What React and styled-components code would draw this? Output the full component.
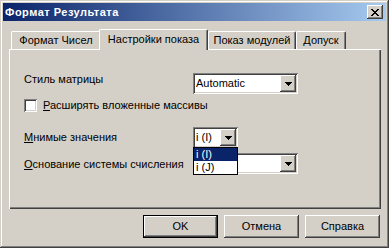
import React from 'react';
import styled, { createGlobalStyle, css } from 'styled-components';

const Global = createGlobalStyle`
  html, body { margin: 0; padding: 0; background: #d4d0c8; overflow: hidden; }
  body { font-family: "Liberation Sans", Arial, sans-serif; font-size: 11px; }
`;

const raised = css`
  box-shadow: inset -1px -1px #404040, inset 1px 1px #ffffff, inset -2px -2px #808080, inset 2px 2px #d4d0c8;
`;
const sunken = css`
  box-shadow: inset 1px 1px #808080, inset -1px -1px #ffffff, inset 2px 2px #404040, inset -2px -2px #d4d0c8;
`;

const Window = styled.div`
  width: 389px;
  height: 248px;
  box-sizing: border-box;
  padding: 3px;
  background: #d4d0c8;
  box-shadow: inset -1px -1px #404040, inset 1px 1px #d4d0c8, inset -2px -2px #808080, inset 2px 2px #ffffff;
  display: flex;
  flex-direction: column;
  font-family: "Liberation Sans", Arial, sans-serif;
  font-size: 11px;
  color: #000;
`;

const TitleBar = styled.div`
  height: 18px;
  flex: none;
  display: flex;
  align-items: center;
  justify-content: space-between;
  padding: 0 3px 0 2px;
  background: linear-gradient(to right, #0a246a, #a6caf0);
`;

const Title = styled.span`
  color: #fff;
  font-weight: bold;
  font-size: 11px;
  letter-spacing: 0.5px;
  line-height: 13px;
  white-space: nowrap;
`;

const CloseButton = styled.div`
  width: 16px;
  height: 14px;
  background: #d4d0c8;
  ${raised};
  display: flex;
  align-items: center;
  justify-content: center;
`;

const Body = styled.div`
  flex: 1;
  display: flex;
  flex-direction: column;
  padding: 8px 5px 0 6px;
`;

const TabRow = styled.div`
  display: flex;
  height: 21px;
  padding-left: 2px;
  position: relative;
  z-index: 1;
  margin-bottom: -1px;
`;

const Tab = styled.div`
  box-sizing: border-box;
  position: relative;
  z-index: ${p => (p.$active ? 2 : 1)};
  width: ${p => p.$w}px;
  height: ${p => (p.$active ? 21 : 18)}px;
  margin-top: ${p => (p.$active ? 0 : 2)}px;
  margin-left: ${p => p.$ml || 0}px;
  background: #d4d0c8;
  border-top: 1px solid #fff;
  border-left: 1px solid #fff;
  border-right: 1px solid #404040;
  border-radius: 2px 2px 0 0;
  box-shadow: inset -1px 0 #808080;
  display: flex;
  align-items: ${p => (p.$active ? 'flex-start' : 'center')};
  padding-top: ${p => (p.$active ? 3 : 0)}px;
  justify-content: center;
  white-space: nowrap;
  line-height: 13px;
`;

const Panel = styled.div`
  height: 160px;
  box-sizing: border-box;
  background: #d4d0c8;
  box-shadow: inset 1px 1px #ffffff, inset -1px -1px #404040, inset -2px -2px #808080;
  display: flex;
  flex-direction: column;
  padding-left: 15px;
`;

const Row = styled.div`
  display: flex;
  align-items: flex-start;
  margin-top: ${p => p.$top}px;
`;

const Label = styled.div`
  width: 169px;
  padding-top: ${p => p.$dy || 0}px;
  line-height: 13px;
  white-space: nowrap;
`;

const CheckLabel = styled.div`
  margin-left: 6px;
  line-height: 13px;
  white-space: nowrap;
`;

const Checkbox = styled.div`
  width: 13px;
  height: 13px;
  box-sizing: border-box;
  background: #fff;
  ${sunken};
`;

const Combo = styled.div`
  position: relative;
  width: ${p => p.$w}px;
  height: 21px;
  box-sizing: border-box;
  padding: 2px 2px 2px 3px;
  background: #fff;
  ${sunken};
  display: flex;
  align-items: center;
`;

const ComboText = styled.div`
  flex: 1;
  line-height: 13px;
  white-space: nowrap;
  overflow: hidden;
`;

const DropButton = styled.div`
  width: 16px;
  height: 17px;
  background: #d4d0c8;
  ${raised};
  display: flex;
  align-items: center;
  justify-content: center;
`;

const DropList = styled.div`
  position: absolute;
  top: 20px;
  left: 0;
  width: 45px;
  box-sizing: border-box;
  border: 1px solid #000;
  background: #fff;
  z-index: 5;
`;

const DropItem = styled.div`
  height: 13px;
  line-height: 13px;
  padding-left: 2px;
  background: ${p => (p.$sel ? '#0a246a' : '#fff')};
  color: ${p => (p.$sel ? '#fff' : '#000')};
  white-space: nowrap;
`;

const ButtonRow = styled.div`
  display: flex;
  justify-content: flex-end;
  gap: 6px;
  margin-top: 6px;
  padding-right: 1px;
`;

const Button = styled.div`
  width: 75px;
  height: 23px;
  box-sizing: border-box;
  background: #d4d0c8;
  ${p =>
    p.$default
      ? css`box-shadow: inset 0 0 0 1px #000, inset -2px -2px #404040, inset 2px 2px #fff, inset -3px -3px #808080;`
      : raised};
  display: flex;
  align-items: center;
  justify-content: center;
  line-height: 13px;
`;

const Arrow = () => (
  <svg width="7" height="4" viewBox="0 0 7 4" shapeRendering="crispEdges">
    <rect x="0" y="0" width="7" height="1" fill="#000" />
    <rect x="1" y="1" width="5" height="1" fill="#000" />
    <rect x="2" y="2" width="3" height="1" fill="#000" />
    <rect x="3" y="3" width="1" height="1" fill="#000" />
  </svg>
);

const CloseGlyph = () => (
  <svg width="8" height="7" viewBox="0 0 8 7" shapeRendering="crispEdges">
    {[
      [0, 0], [6, 0], [1, 1], [5, 1], [2, 2], [4, 2], [3, 3], [2, 4], [4, 4], [1, 5], [5, 5], [0, 6], [6, 6],
    ].map(([x, y], i) => (
      <rect key={i} x={x} y={y} width="2" height="1" fill="#000" />
    ))}
  </svg>
);

export default function App() {
  return (
    <>
      <Global />
      <Window>
        <TitleBar>
          <Title>Формат Результата</Title>
          <CloseButton>
            <CloseGlyph />
          </CloseButton>
        </TitleBar>
        <Body>
          <TabRow>
            <Tab $w={90}>Формат Чисел</Tab>
            <Tab $w={109} $active $ml={-2}>Настройки показа</Tab>
            <Tab $w={88}>Показ модулей</Tab>
            <Tab $w={50}>Допуск</Tab>
          </TabRow>
          <Panel>
            <Row $top={24}>
              <Label>Стиль матрицы</Label>
              <Combo $w={105}>
                <ComboText>Automatic</ComboText>
                <DropButton><Arrow /></DropButton>
              </Combo>
            </Row>
            <Row $top={5}>
              <Checkbox />
              <CheckLabel><u>Р</u>асширять вложенные массивы</CheckLabel>
            </Row>
            <Row $top={15}>
              <Label $dy={4}><u>М</u>нимые значения</Label>
              <Combo $w={45}>
                <ComboText>i (I)</ComboText>
                <DropButton><Arrow /></DropButton>
                <DropList>
                  <DropItem $sel>i (I)</DropItem>
                  <DropItem>i (J)</DropItem>
                </DropList>
              </Combo>
            </Row>
            <Row $top={5}>
              <Label $dy={5}><u>О</u>снование системы счисления</Label>
              <Combo $w={105}>
                <ComboText></ComboText>
                <DropButton><Arrow /></DropButton>
              </Combo>
            </Row>
          </Panel>
          <ButtonRow>
            <Button $default>OK</Button>
            <Button>Отмена</Button>
            <Button>Справка</Button>
          </ButtonRow>
        </Body>
      </Window>
    </>
  );
}
